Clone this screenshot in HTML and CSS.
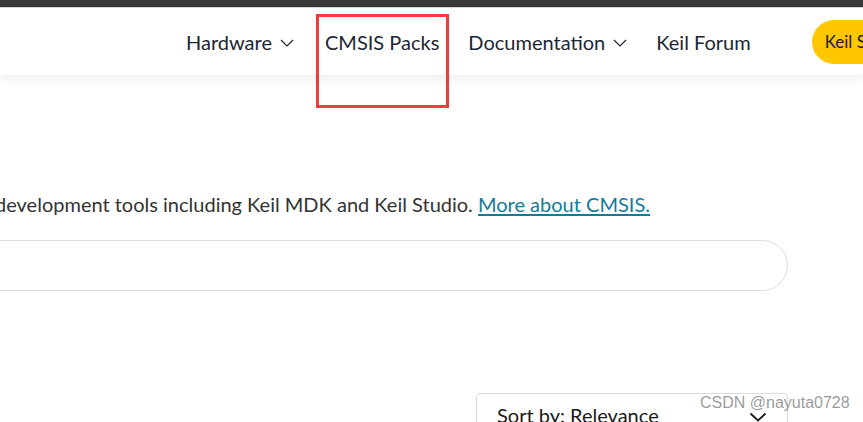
FILE: index.html
```html
<!DOCTYPE html>
<html lang="en">
<head>
<meta charset="utf-8">
<title>CMSIS Packs</title>
<link rel="stylesheet" href="styles.css">
</head>
<body>
<div class="topbar"></div>
<header class="header">
  <nav class="nav">
    <a class="nav-item nav-hw">Hardware
      <svg class="chev" viewBox="0 0 14 8" width="14" height="8"><path d="M1 1 L7 7 L13 1" fill="none" stroke="currentColor" stroke-width="1.2"/></svg>
    </a>
    <a class="nav-item nav-packs">CMSIS Packs</a>
    <a class="nav-item nav-docs">Documentation
      <svg class="chev" viewBox="0 0 14 8" width="14" height="8"><path d="M1 1 L7 7 L13 1" fill="none" stroke="currentColor" stroke-width="1.2"/></svg>
    </a>
    <a class="nav-item nav-forum">Keil Forum</a>
    <a class="cta">Keil Studio</a>
  </nav>
  <div class="highlight"></div>
</header>
<main class="main">
  <p class="intro">development tools including Keil MDK and Keil Studio. <a class="link">More about CMSIS.</a></p>
  <div class="search"></div>
  <div class="sort">
    <span class="sort-label">Sort by: Relevance</span>
    <svg class="sort-chev" viewBox="0 0 18 10" width="18" height="10"><path d="M1.5 1.5 L9 8.5 L16.5 1.5" fill="none" stroke="currentColor" stroke-width="1.8"/></svg>
  </div>
</main>
<div class="watermark">CSDN @nayuta0728</div>
</body>
</html>
```
FILE: styles.css
```css
html, body {
  margin: 0;
  padding: 0;
}
body {
  width: 863px;
  height: 422px;
  overflow: hidden;
  position: relative;
  background: #ffffff;
  font-family: Lato, "Open Sans", sans-serif;
  color: #333333;
}
.topbar {
  height: 7px;
  background: #383838;
  border-bottom: 1px solid #d8d8d8;
}
.header {
  position: relative;
  height: 67px;
  background: #ffffff;
  box-shadow: 0 4px 10px rgba(0, 0, 0, 0.07);
  z-index: 2;
}
.nav {
  display: flex;
  align-items: center;
  height: 67px;
  padding-left: 186px;
  white-space: nowrap;
  overflow: hidden;
}
.nav-item {
  display: flex;
  align-items: center;
  gap: 8px;
  font-size: 20px;
  color: #1c2633;
  margin-right: 31px;
}
.nav-packs,
.nav-docs {
  margin-right: 29px;
}
.nav-forum {
  margin-right: 61px;
}
.chev {
  color: #1c2633;
  margin-top: 3px;
}
.cta {
  flex: none;
  display: flex;
  align-items: center;
  height: 44px;
  padding: 0 22px 0 13px;
  background: #ffc700;
  border-radius: 22px;
  font-size: 17px;
  color: #1a1a1a;
}
.highlight {
  position: absolute;
  left: 316px;
  top: 6px;
  width: 127px;
  height: 88px;
  border: 3px solid #f23b3b;
}
.main {
  display: flex;
  flex-direction: column;
  align-items: flex-end;
  padding-right: 75px;
}
.intro {
  margin: 115px 138px 0 0;
  font-size: 20px;
  line-height: 28px;
  white-space: nowrap;
  color: #333333;
}
.link {
  color: #137a9a;
  text-decoration: underline;
  text-underline-offset: 2px;
}
.search {
  margin-top: 22px;
  width: 900px;
  height: 49px;
  border: 1px solid #dcdcdc;
  border-radius: 26px;
  flex: none;
}
.sort {
  margin-top: 102px;
  width: 270px;
  height: 42px;
  border: 1px solid #dcdcdc;
  border-radius: 4px;
  display: flex;
  align-items: flex-start;
  justify-content: space-between;
  padding: 9px 20px 0 20px;
  flex: none;
}
.sort-label {
  font-size: 20px;
  line-height: 24px;
  color: #1a1a1a;
}
.sort-chev {
  color: #1a1a1a;
  margin-top: 9px;
}
.watermark {
  position: absolute;
  left: 700px;
  top: 394px;
  font-family: "Liberation Sans", Arial, sans-serif;
  font-size: 16px;
  color: rgba(120, 120, 120, 0.75);
  z-index: 5;
}
```
